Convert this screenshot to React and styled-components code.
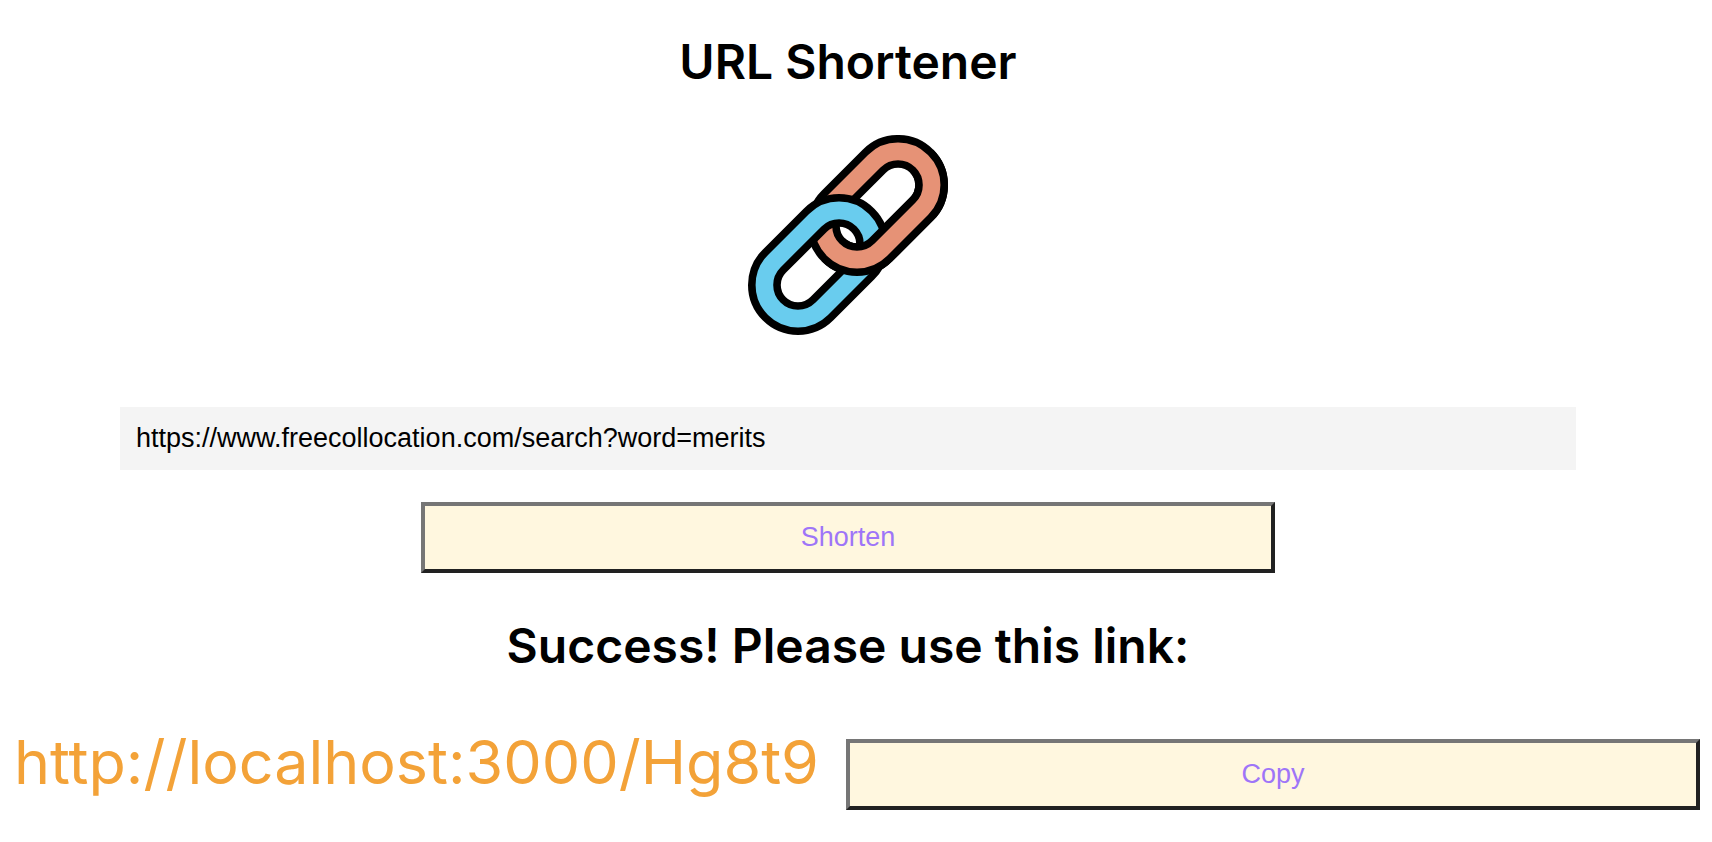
import React, { useState } from "react";
import styled, { createGlobalStyle } from "styled-components";

const GlobalStyle = createGlobalStyle`
  *, *::before, *::after { box-sizing: border-box; }
  body {
    margin: 0;
    background: #fff;
    color: #000;
    font-family: Inter, "Liberation Sans", sans-serif;
  }
`;

const Page = styled.main`
  display: flex;
  flex-direction: column;
`;

const Shortener = styled.form`
  display: flex;
  flex-direction: column;
  align-items: center;
  padding: 32px 16px 0 0;
`;

const Heading = styled.h1`
  margin: 0;
  font-size: 48px;
  font-weight: 600;
  line-height: 60px;
`;

const Logo = styled.svg`
  display: block;
  width: 200px;
  height: 200px;
  margin: 43px 0 72px;
`;

const UrlField = styled.div`
  align-self: stretch;
  padding: 0 120px;
`;

const UrlInput = styled.input`
  display: block;
  width: 100%;
  height: 63px;
  padding: 0 16px;
  border: 0;
  border-radius: 0;
  outline: 0;
  background: #f4f4f4;
  color: #000;
  font: 27px "Liberation Sans", Arial, sans-serif;
`;

const Button = styled.button`
  flex: none;
  width: calc(50vw - 2px);
  height: 71px;
  margin: ${(p) => p.$margin || "0"};
  padding: 0;
  border: 4px solid;
  border-color: #767676 #212121 #212121 #767676;
  background: #fff7df;
  color: #9e75f8;
  font: 27px "Liberation Sans", Arial, sans-serif;
  cursor: pointer;
`;

const Result = styled.section`
  display: flex;
  flex-direction: column;
  align-items: center;
`;

const Message = styled(Heading).attrs({ as: "h2" })`
  margin: 43px 16px 0 0;
`;

const ResultRow = styled.div`
  align-self: stretch;
  display: flex;
  justify-content: space-between;
  align-items: flex-start;
  padding: 48px 12px 0 14px;
`;

const ShortLink = styled.a`
  color: #f3a238;
  font-size: 61px;
  line-height: 76px;
  white-space: nowrap;
  text-decoration: none;
`;

function ChainLink({ x, y, color }) {
  return (
    <g transform={`rotate(-45 ${x} ${y})`} fill="none">
      <rect x={x - 33.6} y={y - 33.6} width="125.2" height="67.2" rx="33.6" stroke="#000" strokeWidth="32.8" />
      <rect x={x - 33.6} y={y - 33.6} width="125.2" height="67.2" rx="33.6" stroke={color} strokeWidth="17.6" />
    </g>
  );
}

function ChainLogo() {
  return (
    <Logo viewBox="0 0 200 200" role="img" aria-label="Chain links">
      <defs>
        <mask id="lower-half" maskUnits="userSpaceOnUse" x="0" y="0" width="200" height="200">
          <path d="M200 0V200H0Z" fill="#fff" />
        </mask>
      </defs>
      <ChainLink x={109} y={91} color="#e69276" />
      <ChainLink x={50} y={150} color="#69ccee" />
      <g mask="url(#lower-half)">
        <ChainLink x={109} y={91} color="#e69276" />
      </g>
    </Logo>
  );
}

export default function App() {
  const [url, setUrl] = useState("https://www.freecollocation.com/search?word=merits");
  const shortUrl = "http://localhost:3000/Hg8t9";

  return (
    <>
      <GlobalStyle />
      <Page>
        <Shortener onSubmit={(e) => e.preventDefault()}>
          <Heading>URL Shortener</Heading>
          <ChainLogo />
          <UrlField>
            <UrlInput aria-label="URL" value={url} onChange={(e) => setUrl(e.target.value)} />
          </UrlField>
          <Button type="submit" $margin="32px 0 0">Shorten</Button>
        </Shortener>
        <Result>
          <Message>Success! Please use this link:</Message>
          <ResultRow>
            <ShortLink href={shortUrl}>{shortUrl}</ShortLink>
            <Button type="button" $margin="15px 0 0" onClick={() => navigator.clipboard?.writeText(shortUrl)}>
              Copy
            </Button>
          </ResultRow>
        </Result>
      </Page>
    </>
  );
}
